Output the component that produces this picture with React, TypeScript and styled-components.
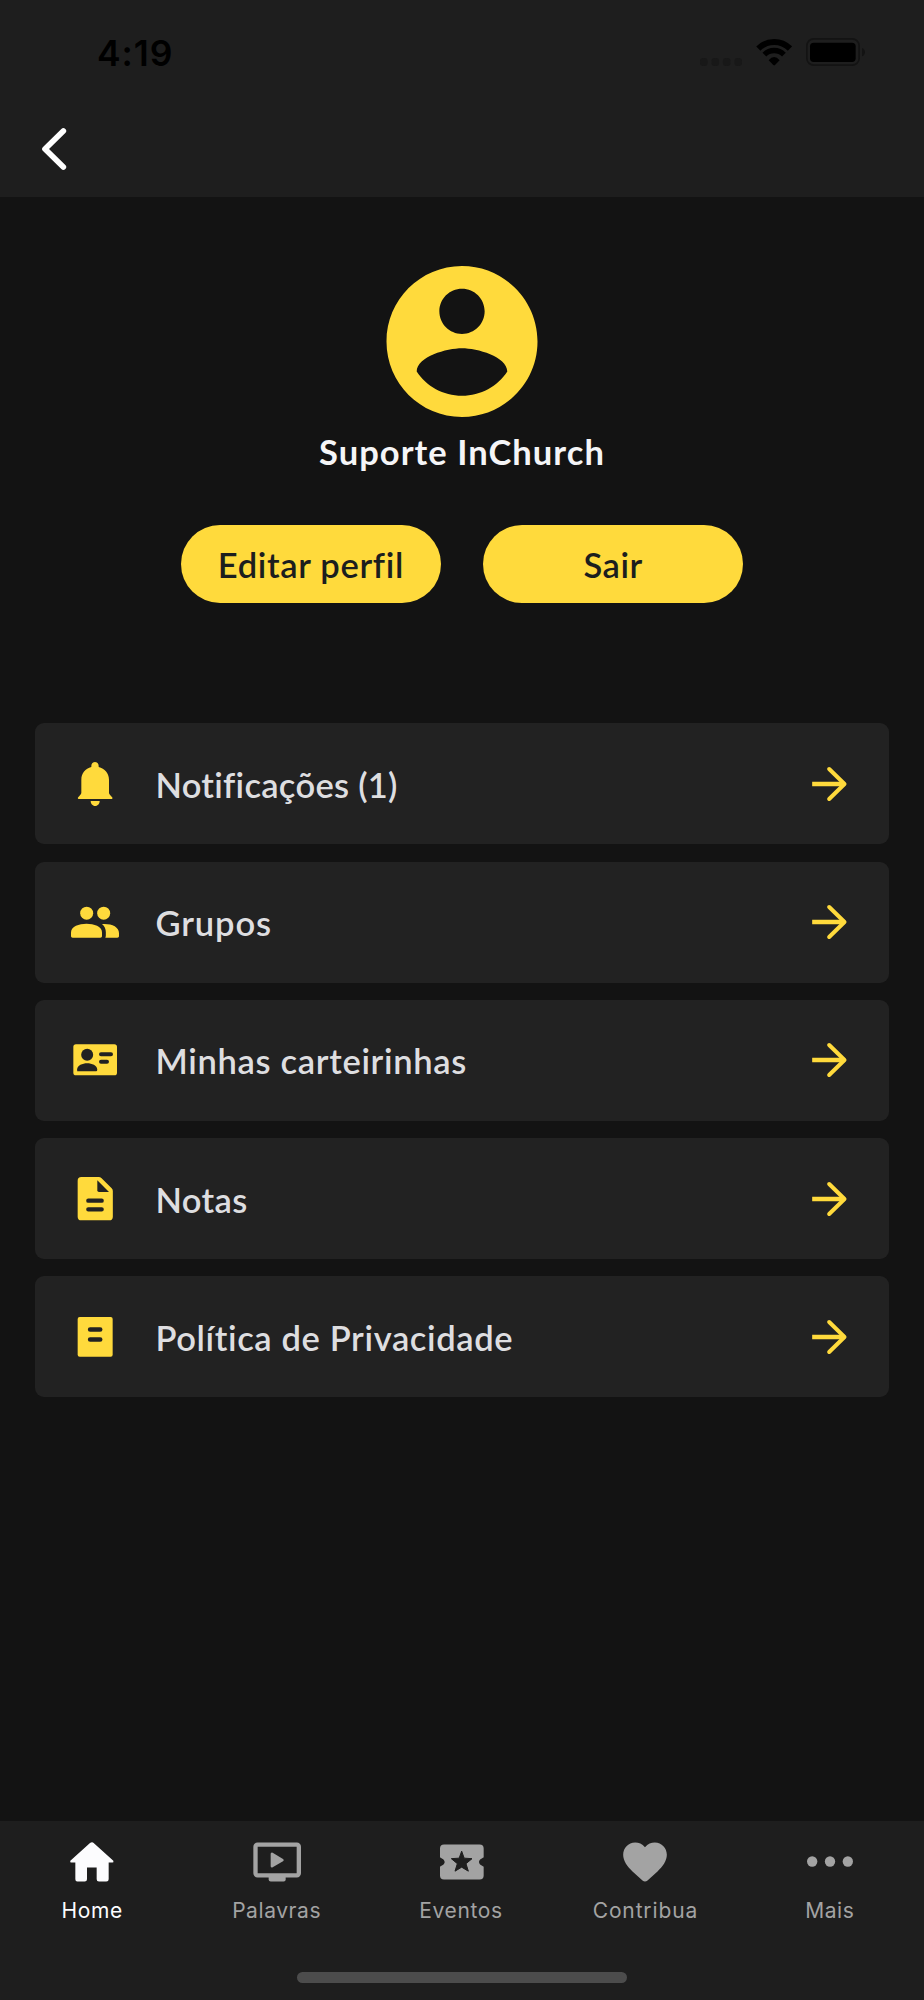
import React from 'react';
import styled, { createGlobalStyle } from 'styled-components';

const color = {
  page: '#131313',
  bar: '#1e1e1e',
  card: '#222222',
  accent: '#ffda3c',
  text: '#dedee0',
  muted: '#a3a3a3',
};

const GlobalStyle = createGlobalStyle`
  * { box-sizing: border-box; }
  body { margin: 0; background: ${color.page}; }
  button { border: 0; padding: 0; background: none; font: inherit; color: inherit; }
`;

const Screen = styled.div`
  display: flex;
  flex-direction: column;
  width: 924px;
  height: 2000px;
  overflow: hidden;
  background: ${color.page};
  font-family: Lato, 'Open Sans', sans-serif;
`;

const Header = styled.header`
  flex: none;
  height: 197px;
  background: ${color.bar};
`;

const StatusBar = styled.div`
  display: flex;
  align-items: center;
  justify-content: space-between;
  height: 104px;
  padding: 0 59px 0 97px;
  color: #000;
`;

const Clock = styled.span`
  padding-top: 3px;
  font: 600 35.5px/44px Inter, sans-serif;
  letter-spacing: 0.9px;
`;

const StatusIcons = styled.div`
  display: flex;
  align-items: center;
  gap: 14px;
`;

const NavBar = styled.div`
  display: flex;
  align-items: center;
  height: 90px;
  padding-left: 28px;
`;

const BackButton = styled.button`
  display: flex;
  width: 60px;
  height: 60px;
`;

const Icon = styled.svg`
  display: block;
  flex: none;
  width: 60px;
  height: 60px;
  fill: currentColor;
`;

const Main = styled.main`
  flex: 1;
  padding: 69px 34.6px 0;
`;

const Profile = styled.section`
  display: flex;
  flex-direction: column;
  align-items: center;
`;

const Avatar = styled.svg`
  display: block;
  width: 152px;
  height: 151px;
  fill: ${color.accent};
`;

const UserName = styled.h1`
  margin: 15px 0 0;
  font-size: 34.5px;
  line-height: 40px;
  font-weight: 700;
  letter-spacing: 1.05px;
  color: #f5f5f7;
`;

const Actions = styled.div`
  display: flex;
  gap: 42.8px;
  margin-top: 53px;
`;

const PillButton = styled.button<{ $tracking: number }>`
  width: 259.4px;
  height: 78px;
  border-radius: 39px;
  background: ${color.accent};
  color: #1c1e1e;
  font-size: 34.5px;
  line-height: 79px;
  font-weight: 600;
  letter-spacing: ${p => p.$tracking}px;
  text-align: center;
`;

const Menu = styled.ul`
  display: flex;
  flex-direction: column;
  gap: 17.25px;
  margin: 120.4px 0 0;
  padding: 0;
  list-style: none;
`;

const MenuRow = styled.li`
  display: flex;
  align-items: center;
  height: 121px;
  padding: 0 30.4px;
  border-radius: 9px;
  background: ${color.card};
  color: ${color.accent};
`;

const MenuLabel = styled.span<{ $tracking: number }>`
  flex: 1;
  margin-left: 30.5px;
  padding-top: 2px;
  font-size: 34.5px;
  line-height: 42px;
  font-weight: 600;
  letter-spacing: ${p => p.$tracking}px;
  color: ${color.text};
`;

const Footer = styled.footer`
  flex: none;
  display: flex;
  flex-direction: column;
  align-items: center;
  height: 179px;
  background: ${color.bar};
`;

const Tabs = styled.nav`
  display: grid;
  grid-template-columns: repeat(5, 1fr);
  width: 100%;
  padding: 10.5px 2px 0 0;
`;

const Tab = styled.div<{ $active?: boolean }>`
  display: flex;
  flex-direction: column;
  align-items: center;
  color: ${p => (p.$active ? '#fcfcfe' : color.muted)};
`;

const TabLabel = styled.span<{ $tracking: number }>`
  margin-top: 6px;
  font: 400 21px/26px Inter, sans-serif;
  letter-spacing: ${p => p.$tracking}px;
`;

const HomeIndicator = styled.div`
  width: 330.5px;
  height: 11px;
  margin-top: 48.5px;
  border-radius: 6px;
  background: #4c4c4c;
`;

const bell = (
  <Icon viewBox="135 132 180 180">
    <path d="M225 156c-6 0-11 5-11 11v4C196 175 184 190 184 209v38c0 4-1.5 6.5-4 9l-4 4c-2 1.5-2.5 3-2.5 4 0 2 1.5 3 3.5 3h97c2 0 3.5-1 3.5-3 0-1-.5-2.5-2.5-4l-4-4c-2.5-2.5-4-5-4-9V209c0-19-13-34-31-38v-4c0-6-5-11-11-11z" />
    <path d="M212 273h27c0 8-5.500 15-13.500 15s-13.500-7-13.500-15z" />
  </Icon>
);

const people = (
  <Icon viewBox="135 547 180 180">
    <circle cx="200" cy="610.5" r="19.5" />
    <circle cx="251" cy="610.5" r="19.5" />
    <path d="M153 668c0-18 24-26 46.500-26s46.500 8 46.500 26v11c0 3-2 5-5 5h-83c-3 0-5-2-5-5z" />
    <path d="M246 643c28-2 51 8 51 27v9c0 3-2 5-5 5h-36c1-2 1.500-4 1.500-7v-9c0-10-3.500-18-11.500-25z" />
  </Icon>
);

const idCard = (
  <Icon viewBox="135 122 180 180">
    <rect x="160" y="165" width="131" height="93" rx="8" />
    <g fill={color.card} stroke="none">
      <circle cx="201.5" cy="196" r="18" />
      <path d="M171.500 246v-6c0-11 16-18 30-18s30 7 30 18v3c0 2-1 3-3 3z" />
    </g>
    <path d="M243 194.500h30M243 217h18" stroke={color.card} strokeWidth="12" strokeLinecap="round" />
  </Icon>
);

const note = (
  <Icon viewBox="135 537 180 180">
    <path d="M184 561h52q5 0 8 3l31 31q3.500 3.500 3.500 8v77q0 11-11 11H184q-11 0-11-11V572q0-11 11-11z" />
    <path d="M232 571v30q0 5 5 5h30z" fill={color.card} />
    <path d="M205 632h40M205 658h40" stroke={color.card} strokeWidth="13" strokeLinecap="round" />
  </Icon>
);

const policy = (
  <Icon viewBox="135 141 180 180">
    <rect x="173" y="171" width="105" height="119" rx="6" />
    <path d="M210.500 208.500h30M210.500 238.500h30" stroke={color.card} strokeWidth="14" strokeLinecap="round" />
  </Icon>
);

const Arrow = () => (
  <Icon viewBox="113.5 132 180 180">
    <path d="M153 222h97" fill="none" stroke="currentColor" strokeWidth="14" />
    <path d="M204 177l46 45-46 45" fill="none" stroke="currentColor" strokeWidth="12" strokeLinecap="round" strokeLinejoin="round" />
  </Icon>
);

const house = (
  <Icon viewBox="187 94.5 180 180">
    <path d="M277 125.500q3 0 5 2l59 53q2 5.500-3 5.500h-11v50q0 7-7 7h-22q-7 0-7-7v-35h-29v35q0 7-7 7h-22q-6 0-6-7v-50h-12q-5 0-3-5.500l59-53q3-2 6-2z" />
  </Icon>
);

const tv = (
  <Icon viewBox="739 94.5 180 180">
    <rect x="764.5" y="132.5" width="130" height="92" rx="6" fill="none" stroke="currentColor" strokeWidth="13" />
    <path d="M804 228h51v9q0 6-6 6h-39q-6 0-6-6z" />
    <path d="M814 160.500v36.500l31-18.250z" stroke="currentColor" strokeWidth="8" strokeLinejoin="round" />
  </Icon>
);

const ticket = (
  <Icon viewBox="304 94.5 180 180">
    <path d="M343 132h107q12 0 12 12v26c0 2-14 5-14 14.500s14 12.500 14 14.500v26q0 12-12 12H343q-12 0-12-12v-26c0-2 14-5 14-14.500s-14-12.500-14-14.500v-26q0-12 12-12z" />
    <path
      d="M396 152l7.500 21 23.500 1.500-18 15 7 22.500-20-12-20 12 7-22.500-18-15 23.500-1.500z"
      fill={color.bar}
      stroke={color.bar}
      strokeWidth="3"
      strokeLinejoin="round"
    />
  </Icon>
);

const heart = (
  <Icon viewBox="136.5 94.5 180 180">
    <path d="M226.500 140C235 130 245 126 256 126c21 0 36 17 36 37 0 19-13 36-28 50l-30 27q-7.500 6-15 0l-30-27c-15-14-28-31-28-50 0-20 15-37 36-37 11 0 21 4 29.500 14z" />
  </Icon>
);

const dots = (
  <Icon viewBox="690 94.5 180 180">
    <circle cx="726.5" cy="183" r="15.5" />
    <circle cx="780" cy="183" r="15.5" />
    <circle cx="833.5" cy="183" r="15.5" />
  </Icon>
);

const menuItems = [
  { label: 'Notificações (1)', icon: bell, tracking: 0.28 },
  { label: 'Grupos', icon: people, tracking: 0.88 },
  { label: 'Minhas carteirinhas', icon: idCard, tracking: 0.68 },
  { label: 'Notas', icon: note, tracking: 0.38 },
  { label: 'Política de Privacidade', icon: policy, tracking: 0.62 },
];

const tabs = [
  { label: 'Home', icon: house, tracking: 0.7, active: true },
  { label: 'Palavras', icon: tv, tracking: 0.57 },
  { label: 'Eventos', icon: ticket, tracking: 0.63 },
  { label: 'Contribua', icon: heart, tracking: 0.86 },
  { label: 'Mais', icon: dots, tracking: 0.5 },
];

export default function App() {
  return (
    <Screen>
      <GlobalStyle />
      <Header>
        <StatusBar>
          <Clock>4:19</Clock>
          <StatusIcons>
            <svg width="42" height="28" viewBox="120 114 126 84" fill="#181818">
              <rect x="120" y="174" width="23" height="24" rx="9" />
              <rect x="154.5" y="174" width="23" height="24" rx="9" />
              <rect x="188.5" y="174" width="23" height="24" rx="9" />
              <rect x="223" y="174" width="23" height="24" rx="9" />
            </svg>
            <svg width="36.3" height="28" viewBox="287 114 109 84">
              <g fill="none" stroke="#000">
                <path d="M294.100 145.600A67 67 0 0 1 388.900 145.600" strokeWidth="18" />
                <path d="M312.200 163.700A41.500 41.500 0 0 1 370.800 163.700" strokeWidth="16" />
              </g>
              <path d="M325 181q16.500-20 33 0l-14 14q-2.500 2.500-5 0z" />
            </svg>
            <svg width="59" height="28" viewBox="438 114 177 84">
              <rect x="440.5" y="116.5" width="157" height="79" rx="21" fill="none" stroke="#131313" strokeWidth="5" />
              <rect x="450" y="128" width="137" height="58" rx="11" />
              <path d="M606 144q9 4 9 12.500t-9 12.500z" fill="#131313" />
            </svg>
          </StatusIcons>
        </StatusBar>
        <NavBar>
          <BackButton aria-label="Voltar">
            <Icon viewBox="85 357 180 180">
              <path d="M191 393l-55 54 55 54" fill="none" stroke="#fff" strokeWidth="17" strokeLinecap="round" strokeLinejoin="round" />
            </Icon>
          </BackButton>
        </NavBar>
      </Header>

      <Main>
        <Profile>
          <Avatar viewBox="1.934 2 20.132 20">
            <path d="M12 2C6.480 2 2 6.480 2 12s4.480 10 10 10 10-4.480 10-10S17.520 2 12 2zm0 3c1.660 0 3 1.340 3 3s-1.340 3-3 3-3-1.340-3-3 1.340-3 3-3zm0 14.200c-2.500 0-4.710-1.280-6-3.220.03-1.990 4-3.080 6-3.080 1.990 0 5.970 1.090 6 3.080-1.290 1.940-3.500 3.220-6 3.220z" />
          </Avatar>
          <UserName>Suporte InChurch</UserName>
          <Actions>
            <PillButton $tracking={0.67}>Editar perfil</PillButton>
            <PillButton $tracking={0.45}>Sair</PillButton>
          </Actions>
        </Profile>

        <Menu>
          {menuItems.map(item => (
            <MenuRow key={item.label}>
              {item.icon}
              <MenuLabel $tracking={item.tracking}>{item.label}</MenuLabel>
              <Arrow />
            </MenuRow>
          ))}
        </Menu>
      </Main>

      <Footer>
        <Tabs>
          {tabs.map(tab => (
            <Tab key={tab.label} $active={tab.active}>
              {tab.icon}
              <TabLabel $tracking={tab.tracking}>{tab.label}</TabLabel>
            </Tab>
          ))}
        </Tabs>
        <HomeIndicator />
      </Footer>
    </Screen>
  );
}
